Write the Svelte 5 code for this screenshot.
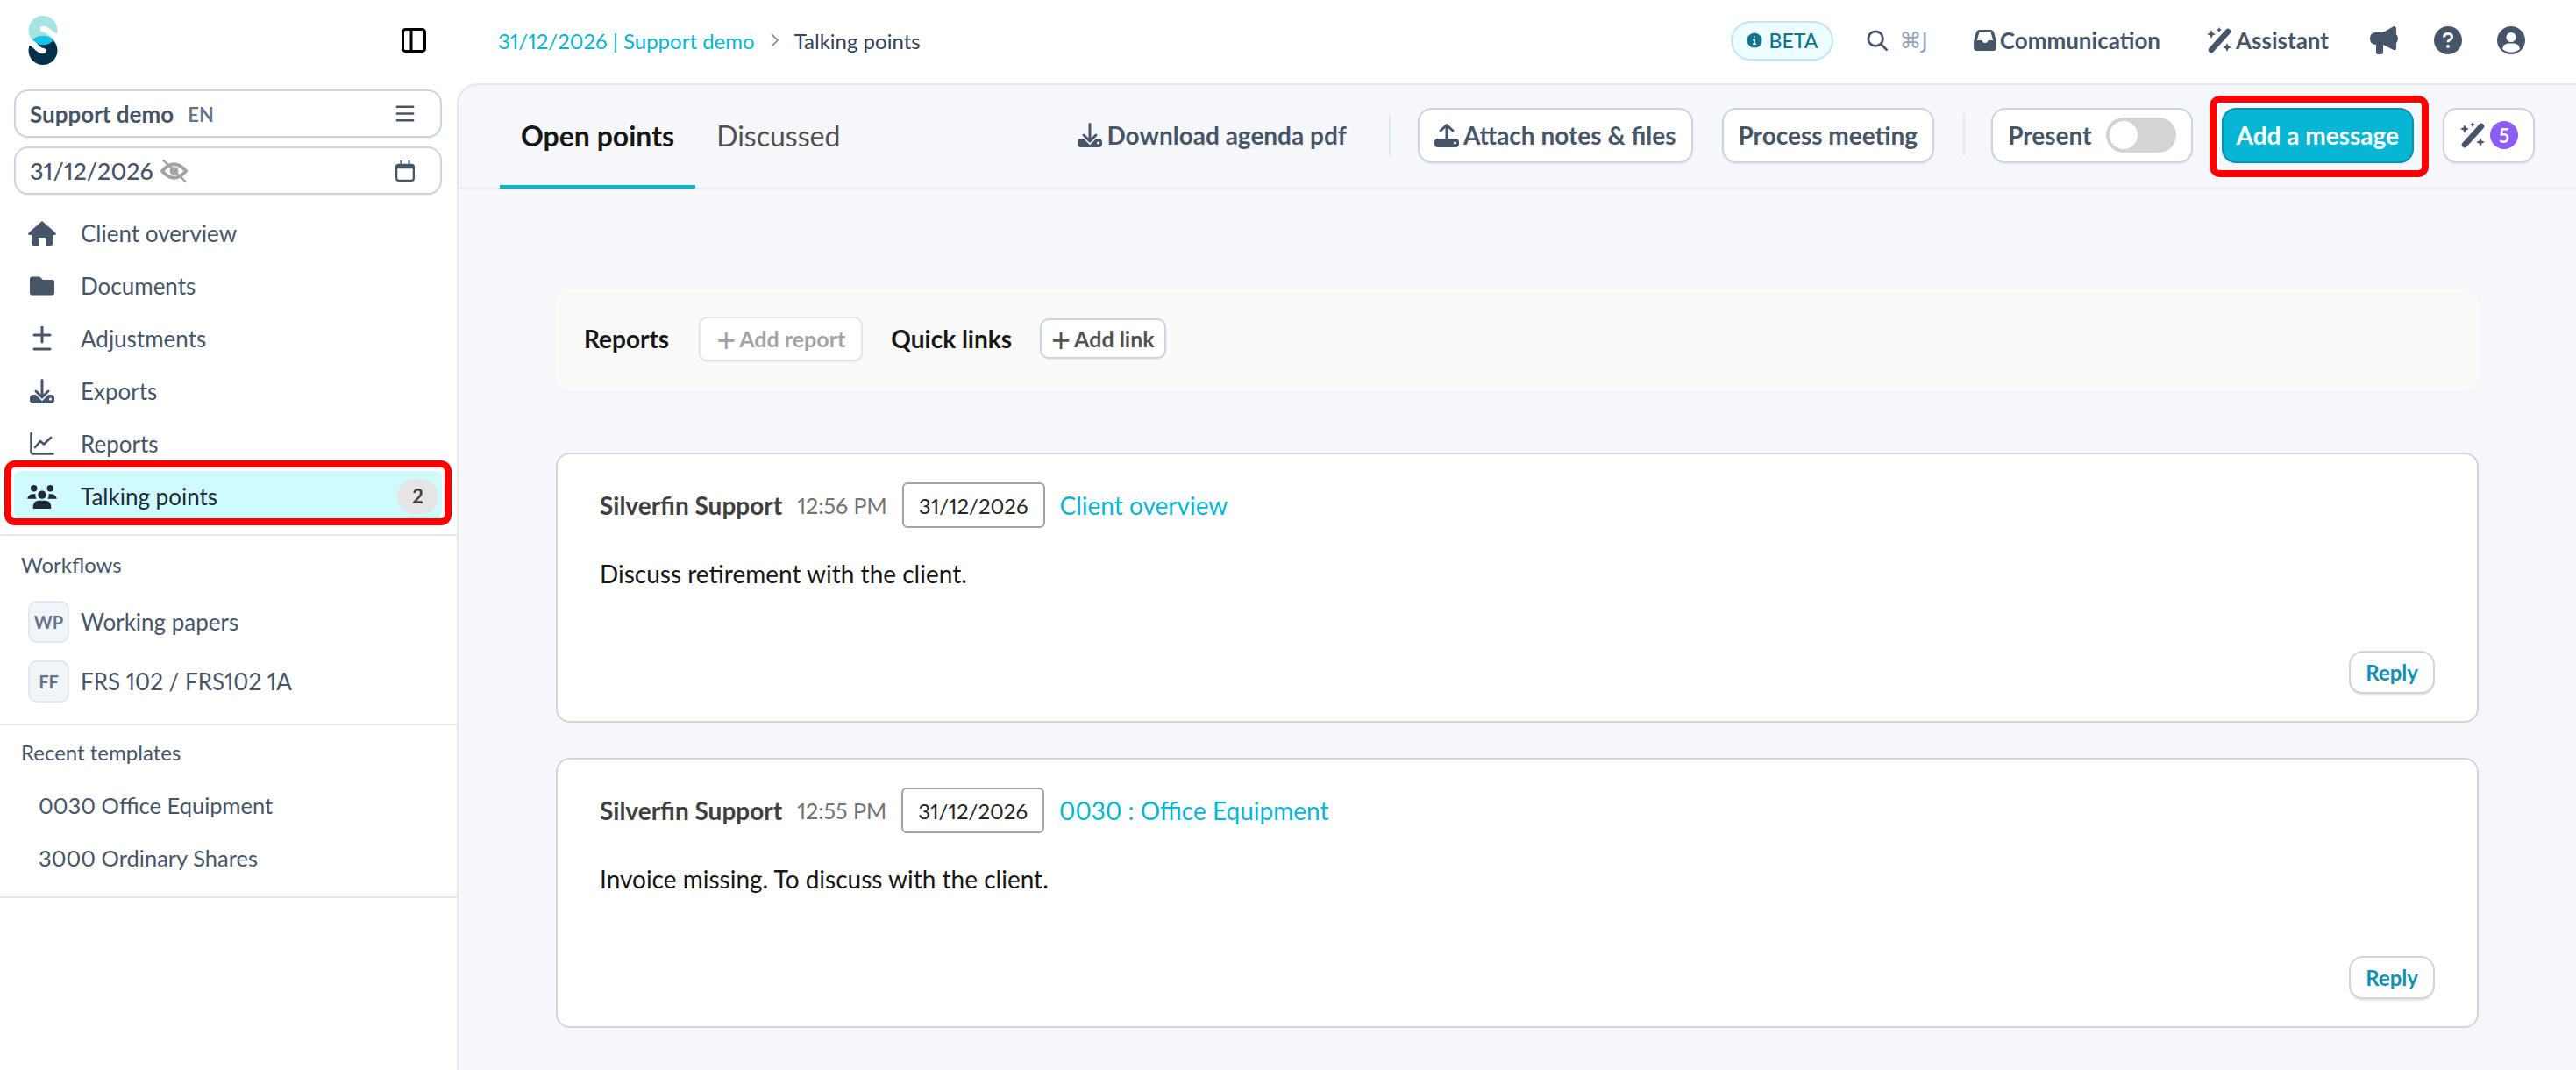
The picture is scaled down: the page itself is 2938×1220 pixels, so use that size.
<script>
  const nav = [
    { key: 'home', label: 'Client overview' },
    { key: 'folder', label: 'Documents' },
    { key: 'plusminus', label: 'Adjustments' },
    { key: 'download', label: 'Exports' },
    { key: 'chart', label: 'Reports' },
    { key: 'users', label: 'Talking points', active: true, count: 2 }
  ]
  const workflows = [
    { code: 'WP', label: 'Working papers' },
    { code: 'FF', label: 'FRS 102 / FRS102 1A' }
  ]
  const templates = ['0030 Office Equipment', '3000 Ordinary Shares']
  const points = [
    { time: '12:56 PM', link: 'Client overview', text: 'Discuss retirement with the client.' },
    { time: '12:55 PM', link: '0030 : Office Equipment', text: 'Invoice missing. To discuss with the client.' }
  ]
</script>

{#snippet wand()}
  <svg class="ic-wand" viewBox="0 0 30 30" fill="currentColor">
    <path d="M6 26 L25 5" stroke="currentColor" stroke-width="6.500" stroke-linecap="round" />
    <path d="M6 3 l1.5 3.5 3.5 1.5 -3.5 1.5 -1.5 3.5 -1.5 -3.5 -3.500 -1.5 3.500 -1.5z" />
    <path d="M15 0 l1 2 2 1 -2 1 -1 2 -1 -2 -2 -1 2 -1z" />
    <path d="M24 18 l1.500 3.500 3.500 1.500 -3.500 1.500 -1.500 3.500 -1.500 -3.500 -3.500 -1.500 3.500 -1.500z" />
  </svg>
{/snippet}

{#snippet tray(up, bg)}
  <svg class="ic-tray" viewBox="0 0 28 28" fill="currentColor">
    <rect x="0" y="18" width="28" height="10" rx="4" />
    <circle cx="23.500" cy="23" r="1.600" fill={bg} />
    {#if up}
      <path d="M14 22 V3 M7 9 L14 2.500 L21 9" fill="none" stroke="currentColor" stroke-width="3" stroke-linecap="round" stroke-linejoin="round" />
    {:else}
      <path d="M14 1.500 V21 M7 14 L14 21 L21 14" fill="none" stroke={bg} stroke-width="6" />
      <path d="M14 1.500 V21 M7 14 L14 21 L21 14" fill="none" stroke="currentColor" stroke-width="3" stroke-linecap="round" stroke-linejoin="round" />
    {/if}
  </svg>
{/snippet}

{#snippet navIcon(key)}
  {#if key === 'home'}
    <svg class="nav-icon" viewBox="0 0 32 28" fill="currentColor"><path d="M16 0 L31.500 13.500 Q32.500 16 30 16 H28 V26 Q28 28 26 28 H20 V19 H12 V28 H6 Q4 28 4 26 V16 H2 Q-0.500 16 0.500 13.500z" /></svg>
  {:else if key === 'folder'}
    <svg class="nav-icon" viewBox="0 0 512 512" fill="currentColor"><path d="M464 128H272l-64-64H48C21.49 64 0 85.49 0 112v288c0 26.51 21.49 48 48 48h416c26.51 0 48-21.49 48-48V176c0-26.51-21.49-48-48-48z" /></svg>
  {:else if key === 'plusminus'}
    <svg class="nav-icon" viewBox="0 0 28 28" fill="none" stroke="currentColor" stroke-width="3" stroke-linecap="round"><path d="M14 1 V18 M5 10 H23 M5 26 H23" /></svg>
  {:else if key === 'download'}
    {@render tray(false, '#fff')}
  {:else if key === 'chart'}
    <svg class="nav-icon" viewBox="0 0 28 28" fill="none" stroke="currentColor" stroke-width="2.600" stroke-linecap="round" stroke-linejoin="round"><path d="M1.500 2 V23 a2.500 2.500 0 0 0 2.500 2.500 H26.500 M6 18 L12 11 L16 14.500 L24 7" /></svg>
  {:else}
    <svg class="nav-icon users" viewBox="0 0 36 30" fill="currentColor">
      <circle cx="8" cy="5" r="4" /><circle cx="28" cy="5" r="4" /><circle cx="18" cy="13" r="5" />
      <path d="M0 18 q1 -6 7 -6 h3 q-1 3 1 6z M36 18 q-1 -6 -7 -6 h-3 q1 3 -1 6z M7 30 q-1 -10 8 -10 h6 q9 0 8 10z" />
    </svg>
  {/if}
{/snippet}

<div class="app">
  <aside class="sidebar">
    <div class="brand">
      <svg class="logo" viewBox="0 0 36 56">
        <circle cx="18" cy="16.500" r="16.500" fill="#a6e3e1" />
        <circle cx="18" cy="39.500" r="16.500" fill="#04304a" />
        <path d="M5.900 28 a16.500 16.500 0 0 1 24.200 0 a16.500 16.500 0 0 1 -24.200 0z" fill="#15c5e8" />
        <path d="M18 15 C25 15 25 22 36 25" fill="none" stroke="#fff" stroke-width="6.500" stroke-linecap="round" />
        <path d="M0 29 C11 32 11 40 18 40" fill="none" stroke="#fff" stroke-width="6.500" stroke-linecap="round" />
      </svg>
      <svg class="panel-toggle" viewBox="0 0 28 28" fill="none" stroke="#000" stroke-width="3"><rect x="1.500" y="1.500" width="25" height="25" rx="3" /><path d="M11 2 V26" /></svg>
    </div>

    <div class="select">
      <span class="client">Support demo</span>
      <span class="lang">EN</span>
      <svg class="select-icon" viewBox="0 0 24 24" fill="none" stroke="currentColor" stroke-width="2.800" stroke-linecap="round"><path d="M2 3 H22 M2 11.500 H22 M2 20 H22" /></svg>
    </div>
    <div class="select second">
      <span class="client regular">31/12/2026</span>
      <svg class="eye" viewBox="0 0 32 28" fill="none" stroke="#a3a3a3" stroke-width="4"><path d="M2 14 Q16 -2 30 14 Q16 30 2 14z" /><circle cx="16" cy="14" r="3" fill="#a3a3a3" /><path d="M3 1 L30 27" stroke-width="2.500" /></svg>
      <svg class="select-icon" viewBox="0 0 24 26" fill="currentColor"><path d="M6 0 h2 v4 h8 v-4 h2 v4 h2 a4 4 0 0 1 4 4 v14 a4 4 0 0 1 -4 4 h-16 a4 4 0 0 1 -4 -4 v-14 a4 4 0 0 1 4 -4 h2z M2.500 10 v12 a1.500 1.500 0 0 0 1.500 1.500 h16 a1.500 1.500 0 0 0 1.500 -1.500 v-12z" fill-rule="evenodd" /></svg>
    </div>

    <nav class="nav">
      {#each nav as item}
        <div class="nav-item" class:active={item.active}>
          {@render navIcon(item.key)}
          <span>{item.label}</span>
          {#if item.count}<span class="count">{item.count}</span>{/if}
        </div>
      {/each}
    </nav>

    <section class="group workflows">
      <h4>Workflows</h4>
      {#each workflows as flow}
        <div class="flow">
          <span class="code">{flow.code}</span>
          <span>{flow.label}</span>
        </div>
      {/each}
    </section>

    <section class="group recents">
      <h4>Recent templates</h4>
      {#each templates as name}
        <div class="recent">{name}</div>
      {/each}
    </section>
  </aside>

  <main class="main">
    <header class="topbar">
      <div class="crumbs">
        <span class="crumb-link">31/12/2026 | Support demo</span>
        <svg class="chevron" viewBox="0 0 10 18" fill="none" stroke="currentColor" stroke-width="1.600"><path d="M1 1 L9 9 L1 17" /></svg>
        <span>Talking points</span>
      </div>
      <div class="top-actions">
        <span class="beta">
          <svg viewBox="0 0 20 20"><circle cx="10" cy="10" r="9.500" fill="#0e7490" /><path d="M10 5 V6.500 M8 9.500 H10 V14.500 M8 14.500 H12" stroke="#fff" stroke-width="2" fill="none" /></svg>
          BETA
        </span>
        <span class="search">
          <svg viewBox="0 0 26 26" fill="none" stroke="currentColor" stroke-width="3" stroke-linecap="round"><circle cx="11" cy="11" r="9" /><path d="M17.500 17.500 L24.500 24.500" /></svg>
          <span class="kbd">⌘J</span>
        </span>
        <span class="top-link comm">
          <svg viewBox="0 0 28 26" fill="currentColor"><path d="M7 0 h14 q3 0 4 3 l3 11 v8 q0 4 -4 4 h-20 q-4 0 -4 -4 v-8 l3 -11 q1 -3 4 -3z M7 3 l-3 10 h6 l2 3 h4 l2 -3 h6 l-3 -10z" fill-rule="evenodd" /></svg>
          Communication
        </span>
        <span class="top-link assistant">{@render wand()}Assistant</span>
        <svg class="megaphone" viewBox="0 0 32 32" fill="currentColor"><path d="M27 0 q3 0 3 3 v6 q2 2 2 5 t-2 5 v6 q0 3 -3 2 L15 21 v9 q0 2 -2 2 h-4 q-2 0 -2 -2 v-9 q-7 0 -7 -7 t7 -7 h8z" /></svg>
        <svg class="round-icon" viewBox="0 0 32 32"><circle cx="16" cy="16" r="16" fill="currentColor" /><path d="M11.500 12.500 q0 -4 4.500 -4 q4.500 0 4.500 3.500 q0 2 -2.200 3.200 q-2.300 1.200 -2.300 3" fill="none" stroke="#fff" stroke-width="3" /><circle cx="16" cy="23" r="1.900" fill="#fff" /></svg>
        <svg class="round-icon user" viewBox="0 0 32 32"><circle cx="16" cy="16" r="16" fill="currentColor" /><circle cx="16" cy="12.500" r="5.500" fill="#fff" /><path d="M6 26 q1 -6.500 7 -6.500 h6 q6 0 7 6.500 q-4 3.500 -10 3.500 t-10 -3.500z" fill="#fff" /></svg>
      </div>
    </header>

    <div class="panel">
      <div class="tabs">
        <div class="tab current">Open points</div>
        <div class="tab">Discussed</div>
        <div class="tab-actions">
          <span class="text-btn">{@render tray(false, '#f6f7fb')}Download agenda pdf</span>
          <span class="sep first"></span>
          <span class="btn">{@render tray(true, '#fff')}Attach notes &amp; files</span>
          <span class="btn">Process meeting</span>
          <span class="sep"></span>
          <span class="btn present">Present<span class="switch"><span class="knob"></span></span></span>
          <span class="btn primary">Add a message</span>
          <span class="btn magic">{@render wand()}<span class="five">5</span></span>
        </div>
      </div>

      <div class="content">
        <div class="shortcuts">
          <strong>Reports</strong>
          <span class="mini disabled"><span class="plus">+</span>Add report</span>
          <strong class="quick">Quick links</strong>
          <span class="mini"><span class="plus">+</span>Add link</span>
        </div>

        {#each points as point}
          <article class="card">
            <div class="meta">
              <strong>Silverfin Support</strong>
              <span class="time">{point.time}</span>
              <span class="date">31/12/2026</span>
              <span class="link">{point.link}</span>
            </div>
            <p>{point.text}</p>
            <span class="reply">Reply</span>
          </article>
        {/each}
      </div>
    </div>
  </main>
</div>

<style>
  :global(body) {
    margin: 0;
    background: #fff;
  }
  .app {
    display: grid;
    grid-template-columns: 521px 1fr;
    height: 1220px;
    overflow: hidden;
    font-family: Lato, 'Noto Sans', sans-serif;
    font-size: 26px;
    font-variant-numeric: proportional-nums;
    color: #475569;
  }

  /* sidebar */
  .sidebar {
    background: #fff;
    min-width: 0;
  }
  .brand {
    display: flex;
    align-items: center;
    justify-content: space-between;
    height: 56px;
    padding: 18px 35px 28px 31px;
  }
  .logo {
    width: 36px;
    height: 56px;
  }
  .panel-toggle {
    width: 28px;
    height: 28px;
  }
  .select {
    display: flex;
    align-items: center;
    box-sizing: border-box;
    width: 488px;
    height: 55px;
    margin-left: 16px;
    padding: 0 29px 0 16px;
    background: #fff;
    border: 2px solid #cbd5e1;
    border-radius: 16px;
    box-shadow: 0 1px 2px rgba(15, 23, 42, 0.08);
  }
  .second {
    margin-top: 10px;
  }
  .client {
    font-weight: 700;
    font-size: 26px;
  }
  .client.regular {
    font-weight: 500;
    font-size: 27px;
  }
  .lang {
    margin-left: 16px;
    padding-top: 2px;
    font-size: 22px;
    font-weight: 600;
    color: #64748b;
  }
  .eye {
    width: 31px;
    height: 28px;
    margin-left: 8px;
  }
  .select-icon {
    width: 22px;
    height: 24px;
    margin-left: auto;
  }
  .nav {
    display: flex;
    flex-direction: column;
    gap: 6px;
    margin: 15px 17px 0 16px;
  }
  .nav-item {
    position: relative;
    display: flex;
    align-items: center;
    gap: 28px;
    box-sizing: border-box;
    height: 54px;
    padding: 3px 4px 0 16px;
    border-radius: 8px;
  }
  .nav-icon,
  .ic-tray {
    flex: none;
    width: 32px;
    height: 28px;
  }
  .nav-item :global(.ic-tray) {
    width: 28px;
    margin: 0 2px;
  }
  .users {
    width: 34px;
    height: 28px;
    margin-left: -1px;
    margin-right: -1px;
  }
  .active {
    background: #cffafe;
    color: #1e293b;
  }
  .active::after {
    content: '';
    position: absolute;
    inset: -12px -11px -8px -11px;
    border: 8px solid #f00;
    border-radius: 12px;
  }
  .count {
    display: flex;
    align-items: center;
    justify-content: center;
    width: 47px;
    height: 40px;
    margin-left: auto;
    border-radius: 20px;
    background: #e5e5e5;
    color: #404040;
    font-weight: 700;
    font-size: 22px;
  }
  .group {
    border-top: 2px solid #e2e8f0;
  }
  .group h4 {
    margin: 0;
    font-size: 24px;
    line-height: 28px;
    font-weight: 400;
    padding-left: 24px;
  }
  .workflows {
    margin-top: 18px;
    padding: 19px 0 24px;
  }
  .flow {
    display: flex;
    align-items: center;
    gap: 13px;
    height: 48px;
    margin: 20px 0 0 32px;
  }
  .flow:first-of-type {
    margin-top: 27px;
  }
  .code {
    display: flex;
    align-items: center;
    justify-content: center;
    box-sizing: border-box;
    width: 47px;
    height: 48px;
    background: #f1f5f9;
    border: 2px solid #e2e8f0;
    border-radius: 10px;
    font-size: 20px;
    font-weight: 700;
    color: #64748b;
  }
  .recents {
    padding: 17px 0 14px;
    border-bottom: 2px solid #e2e8f0;
  }
  .recent {
    display: flex;
    align-items: center;
    height: 60px;
    padding-left: 44px;
    font-size: 25.5px;
  }
  .recents h4 + .recent {
    margin-top: 16px;
  }

  /* top bar */
  .main {
    display: flex;
    flex-direction: column;
    min-width: 0;
  }
  .topbar {
    display: flex;
    align-items: center;
    justify-content: space-between;
    box-sizing: border-box;
    height: 95px;
    padding: 0 58px 3px 47px;
  }
  .crumbs {
    display: flex;
    align-items: center;
    gap: 18px;
    font-size: 24px;
    color: #334155;
  }
  .crumb-link {
    color: #06b6d4;
  }
  .chevron {
    width: 9px;
    height: 16px;
    color: #64748b;
  }
  .top-actions {
    display: flex;
    align-items: center;
  }
  .beta {
    display: flex;
    align-items: center;
    gap: 8px;
    box-sizing: border-box;
    height: 45px;
    padding: 0 16px;
    background: #ecfeff;
    border: 2px solid #c3e6ee;
    border-radius: 23px;
    color: #0e7490;
    font-size: 23px;
    font-weight: 500;
  }
  .beta svg {
    width: 18px;
    height: 18px;
  }
  .search {
    display: flex;
    align-items: center;
    gap: 13px;
    margin-left: 38px;
  }
  .search svg {
    width: 24px;
    height: 24px;
  }
  .kbd {
    color: #94a3b8;
    font-size: 25px;
    font-family: 'DejaVu Sans', sans-serif;
  }
  .top-link {
    display: flex;
    align-items: center;
    gap: 4px;
    font-weight: 700;
    font-size: 26px;
  }
  .comm {
    margin-left: 52px;
  }
  .comm svg {
    width: 26px;
    height: 24px;
  }
  .assistant {
    margin-left: 52px;
  }
  .ic-wand {
    width: 30px;
    height: 30px;
  }
  .megaphone {
    width: 32px;
    height: 32px;
    margin-left: 47px;
  }
  .round-icon {
    width: 32px;
    height: 32px;
    margin-left: 41px;
  }
  .round-icon.user {
    margin-left: 40px;
  }

  /* panel */
  .panel {
    flex: 1;
    background: #f6f7fb;
    border-top: 2px solid #e2e8f0;
    border-left: 2px solid #e2e8f0;
    border-top-left-radius: 24px;
  }
  .tabs {
    display: flex;
    align-items: stretch;
    box-sizing: border-box;
    height: 118px;
    padding: 0 47px 0 47px;
    border-bottom: 1px solid #e2e8f0;
    box-shadow: 0 1px 2px rgba(15, 23, 42, 0.06);
  }
  .tab {
    display: flex;
    align-items: center;
    padding: 0 24px 4px;
    margin-bottom: -1px;
    font-size: 32px;
    color: #525252;
  }
  .current {
    padding-bottom: 0;
    color: #171717;
    font-weight: 700;
    border-bottom: 4px solid #06b6d4;
  }
  .tab-actions {
    display: flex;
    align-items: center;
    gap: 33px;
    margin-left: auto;
    padding-bottom: 3px;
    font-weight: 700;
    font-size: 28px;
  }
  .text-btn {
    display: flex;
    align-items: center;
    gap: 5px;
    padding-right: 15px;
  }
  .text-btn :global(.ic-tray),
  .btn :global(.ic-tray) {
    width: 28px;
    height: 28px;
  }
  .sep {
    width: 2px;
    height: 48px;
    background: #e2e8f0;
  }
  .sep.first {
    margin-right: -2px;
  }
  .btn {
    display: flex;
    align-items: center;
    gap: 5px;
    box-sizing: border-box;
    height: 63px;
    padding: 0 17px;
    background: #fff;
    border: 2px solid #cbd5e1;
    border-radius: 16px;
    box-shadow: 0 1px 2px rgba(15, 23, 42, 0.08);
    white-space: nowrap;
  }
  .present {
    gap: 16px;
    margin-left: -3px;
  }
  .switch {
    display: flex;
    align-items: center;
    box-sizing: border-box;
    width: 80px;
    height: 40px;
    padding: 0 4px;
    background: #d4d4d4;
    border-radius: 20px;
  }
  .knob {
    width: 32px;
    height: 32px;
    background: #fff;
    border-radius: 50%;
  }
  .btn.primary {
    position: relative;
    padding: 0 15px;
    color: #fff;
    background: #06b6d4;
    border-color: #0891b2;
  }
  .primary::after {
    content: '';
    position: absolute;
    inset: -16px -19px -18px -16px;
    border: 8px solid #f00;
    border-radius: 12px;
  }
  .btn.magic {
    gap: 5px;
    padding: 0 17px;
  }
  .five {
    display: flex;
    align-items: center;
    justify-content: center;
    width: 32px;
    height: 32px;
    background: #8b5cf6;
    border-radius: 50%;
    color: #fff;
    font-size: 22px;
  }

  /* content */
  .content {
    display: flex;
    flex-direction: column;
    padding: 114px 111px 0 111px;
  }
  .shortcuts {
    display: flex;
    align-items: center;
    box-sizing: border-box;
    height: 116px;
    padding: 0 32px 2px;
    background: #fafafb;
    border-radius: 16px;
    color: #171717;
    margin-bottom: 71px;
  }
  .shortcuts strong {
    font-size: 28px;
  }
  .quick {
    margin-left: 32px;
  }
  .mini {
    display: flex;
    align-items: center;
    gap: 4px;
    box-sizing: border-box;
    height: 46px;
    margin-left: 32px;
    padding: 0 11px;
    background: #fff;
    border: 2px solid #cbd5e1;
    border-radius: 10px;
    color: #525252;
    font-weight: 700;
    font-size: 25px;
    box-shadow: 0 1px 2px rgba(15, 23, 42, 0.08);
  }
  .mini.disabled {
    height: 51px;
    margin-left: 34px;
    padding: 0 18px;
    color: #a3a3a3;
    border-color: #e5e5e5;
  }
  .plus {
    font-size: 38px;
    font-weight: 400;
    line-height: 1;
  }
  .card {
    display: flex;
    flex-direction: column;
    box-sizing: border-box;
    height: 308px;
    padding: 32px 48px 31px;
    margin-bottom: 40px;
    background: #fff;
    border: 2px solid #d1d5db;
    border-radius: 16px;
  }
  .meta {
    display: flex;
    align-items: center;
    height: 52px;
  }
  .meta strong {
    color: #404040;
    font-size: 28px;
  }
  .time {
    margin-left: 17px;
    color: #737373;
    font-size: 25px;
  }
  .date {
    display: flex;
    align-items: center;
    box-sizing: border-box;
    height: 52px;
    margin-left: 17px;
    padding: 0 17px;
    border: 2px solid #a3a3a3;
    border-radius: 6px;
    color: #262626;
    font-size: 24px;
  }
  .link {
    margin-left: 17px;
    color: #06b6d4;
    font-size: 28px;
  }
  .card p {
    margin: 36px 0 0;
    color: #171717;
    font-size: 28px;
    line-height: 32px;
  }
  .reply {
    display: flex;
    align-items: center;
    align-self: flex-end;
    box-sizing: border-box;
    height: 49px;
    margin-top: auto;
    padding: 0 17px;
    background: #fff;
    border: 2px solid #d4d4d4;
    border-radius: 16px;
    color: #0e91b2;
    font-weight: 700;
    font-size: 24px;
    box-shadow: 0 2px 1px rgba(0, 0, 0, 0.1);
  }
</style>
